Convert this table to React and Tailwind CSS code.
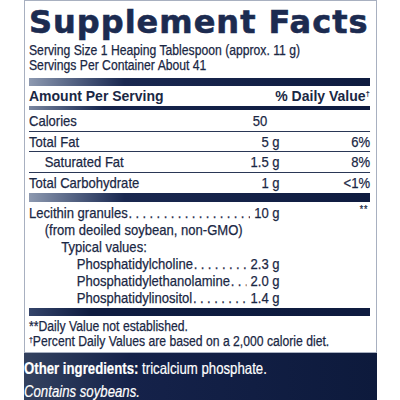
const sans = { fontFamily: '"Liberation Sans", Arial, sans-serif' }

function Narrow({ className, children }) {
  return (
    <div className={"w-[392px] origin-left scale-x-[0.87] [-webkit-text-stroke:0.25px_#1a2744] " + (className || "")}>
      {children}
    </div>
  )
}

function Leader() {
  return (
    <span className="flex-1 overflow-hidden whitespace-nowrap tracking-[3.9px] mr-[5px] ml-[1px]">
      {"................................................"}
    </span>
  )
}

function Row({ label, amount, dv, indent, last, padAmount }) {
  return (
    <div className={"flex " + (last ? "" : "border-b border-[#2a3756]")}>
      <span className={"flex-1 " + (indent ? "pl-[18px]" : "")}>{label}</span>
      <span className={"text-right " + (padAmount ? "pr-[14px]" : "")}>{amount}</span>
      <span className="w-[104px] text-right">{dv}</span>
    </div>
  )
}

export default function App() {
  return (
    <div className="w-[400px] h-[400px] bg-white overflow-hidden text-[#1a2744]" style={sans}>
      <div className="ml-[24px] w-[353px] border border-[#a8b0c0]">
        <div className="pl-[4px] pr-[6px] pt-[1px] pb-[3px]">
          <h1
            className="text-[32px] leading-[40px] font-bold tracking-[1px] text-[#1c2b50] whitespace-nowrap [-webkit-text-stroke:0.6px_#1c2b50]"
            style={{ fontFamily: '"DejaVu Sans", sans-serif' }}
          >
            Supplement Facts
          </h1>

          <Narrow className="text-[14px] leading-[15px] mt-[1px]">
            <p>Serving Size 1 Heaping Tablespoon (approx. 11 g)</p>
            <p>Servings Per Container About 41</p>
          </Narrow>

          <div className="h-[8px] mt-[5px] bg-gradient-to-r from-[#8d99b0] via-[#1a2850] via-[28%] to-[#0e1b3f]" />

          <div className="flex justify-between text-[14px] leading-[17px] font-bold mt-[2px]">
            <span>Amount Per Serving</span>
            <span>
              % Daily Value<sup className="text-[8px] -top-[5px]">†</sup>
            </span>
          </div>
          <div className="h-[4px] mt-[1px] bg-gradient-to-r from-[#7a87a0] via-[#16244c] via-[22%] to-[#0e1b3f]" />

          <Narrow className="text-[15px] leading-[19.5px] pt-[1px]">
            <Row label="Calories" amount="50" padAmount />
            <Row label="Total Fat" amount="5 g" dv="6%" />
            <Row label="Saturated Fat" amount="1.5 g" dv="8%" indent />
            <Row label="Total Carbohydrate" amount="1 g" dv="<1%" last />
          </Narrow>

          <div className="h-[9px] mt-[1px] bg-gradient-to-r from-[#8d99b0] via-[#1a2850] via-[28%] to-[#0e1b3f]" />

          <Narrow className="text-[15px] leading-[17px] pt-[2px]">
            <div className="flex">
              <span>Lecithin granules</span>
              <Leader />
              <span>10 g</span>
              <span className="w-[104px] text-right text-[10px] leading-[12px] tracking-[1px] pr-[2px]">**</span>
            </div>
            <p className="pl-[18px]">(from deoiled soybean, non-GMO)</p>
            <p className="pl-[37px]">Typical values:</p>
            <div className="flex pl-[55px] pr-[104px]">
              <span>Phosphatidylcholine</span>
              <Leader />
              <span>2.3 g</span>
            </div>
            <div className="flex pl-[55px] pr-[104px]">
              <span>Phosphatidylethanolamine</span>
              <Leader />
              <span>2.0 g</span>
            </div>
            <div className="flex pl-[55px] pr-[104px]">
              <span>Phosphatidylinositol</span>
              <Leader />
              <span>1.4 g</span>
            </div>
          </Narrow>

          <div className="h-[8px] mt-[2px] bg-gradient-to-r from-[#34446a] via-[#0f1c40] via-[18%] to-[#0e1b3f]" />

          <Narrow className="text-[14px] leading-[15px] pt-[3px]">
            <p>**Daily Value not established.</p>
            <p>
              <sup className="text-[8px]">†</sup>Percent Daily Values are based on a 2,000 calorie diet.
            </p>
          </Narrow>
        </div>
      </div>

      <div className="ml-[24px] w-[353px] h-[60px] bg-gradient-to-r from-[#34425f] via-[#15224a] via-[30%] to-[#0d1a3c] text-white">
        <div className="w-[441px] origin-left scale-x-[0.8] text-[16.5px] leading-[22.5px] pt-[4px] [-webkit-text-stroke:0.2px_#ffffff]">
          <p>
            <span className="font-bold">Other ingredients:</span> tricalcium phosphate.
          </p>
          <p className="italic">Contains soybeans.</p>
        </div>
      </div>
    </div>
  )
}
